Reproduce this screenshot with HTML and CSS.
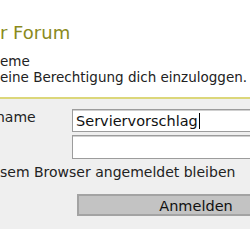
FILE: index.html
```html
<!DOCTYPE html>
<html lang="de">
<head>
<meta charset="utf-8">
<link rel="stylesheet" href="styles.css">
</head>
<body>
<h1 class="title">r Forum</h1>
<p class="msg">eme<br>eine Berechtigung dich einzuloggen.</p>
<form class="panel">
  <div class="row">
    <label class="lbl">name</label>
    <div class="field">Serviervorschlag<span class="caret"></span></div>
  </div>
  <div class="row">
    <span class="lbl"></span>
    <div class="field"></div>
  </div>
  <div class="remember">sem Browser angemeldet bleiben</div>
  <div class="actions">
    <button type="button" class="btn">Anmelden</button>
  </div>
</form>
</body>
</html>
```
FILE: styles.css
```css
html, body {
  margin: 0;
  padding: 0;
  background: #fff;
  overflow: hidden;
}
body {
  font-family: "DejaVu Sans", Verdana, sans-serif;
  color: #222;
  width: 250px;
}
.title {
  margin: 22px 0 0 0;
  font-size: 18px;
  line-height: 22px;
  font-weight: normal;
  color: #8a8a1c;
}
.msg {
  margin: 9px 0 0 0;
  font-size: 13.5px;
  line-height: 16px;
  white-space: nowrap;
}
.panel {
  margin-top: 12px;
  border-top: 2px solid #dcd77a;
  background: #efefef;
  padding: 10px 0 13px 0;
  display: flex;
  flex-direction: column;
}
.row {
  display: grid;
  grid-template-columns: 72px 240px;
  margin-bottom: 3px;
}
.lbl {
  font-size: 14px;
  line-height: 17px;
  margin-left: -4px;
}
.field {
  box-sizing: border-box;
  height: 23px;
  background: #fff;
  border: 1px solid #9c9c9c;
  box-shadow: inset 0 1px 0 #d0d0d0;
  padding: 3px 3px 1px 3px;
  font-size: 14.5px;
  line-height: 17px;
  color: #111;
  white-space: nowrap;
}
.row + .row .field {
  height: 24px;
}
.caret {
  display: inline-block;
  width: 1px;
  height: 16px;
  background: #000;
  vertical-align: -3px;
  margin-left: 1px;
}
.remember {
  margin-top: 2px;
  font-size: 14px;
  line-height: 17px;
  white-space: nowrap;
}
.actions {
  margin-top: 13px;
  padding-left: 77px;
}
.btn {
  box-sizing: border-box;
  width: 238px;
  height: 22px;
  background: #c3c3c3;
  border: 2px solid #a3a3a3;
  font-family: "DejaVu Sans", Verdana, sans-serif;
  font-size: 14.5px;
  line-height: 16px;
  color: #111;
  padding: 1px 0 0 0;
  display: block;
}
```
